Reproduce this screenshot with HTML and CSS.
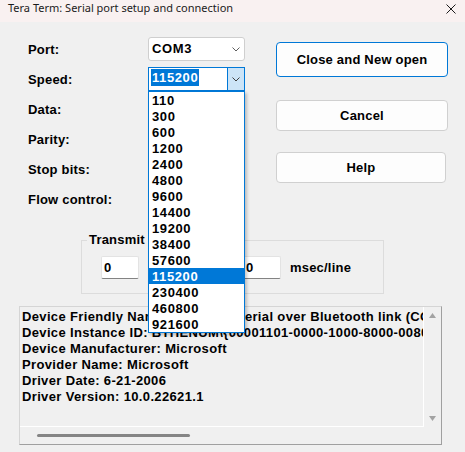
FILE: index.html
```html
<!DOCTYPE html>
<html>
<head>
<meta charset="utf-8">
<title>Tera Term: Serial port setup and connection</title>
<link rel="stylesheet" href="styles.css">
</head>
<body>
<div class="titlebar">
  <span class="title">Tera Term: Serial port setup and connection</span>
  <svg class="close" width="10" height="10" viewBox="0 0 10 10"><path d="M0.5 0.5 L9.5 9.5 M9.5 0.5 L0.5 9.5" stroke="#1b1b1b" stroke-width="1" fill="none"/></svg>
</div>
<div class="dialog">
  <div class="top">
    <div class="form">
      <div class="label">Port:</div>
      <div class="combo">
        <span class="value">COM3</span>
        <span class="chev"><svg width="8" height="5" viewBox="0 0 8 5"><path d="M0.5 0.5 L4 4 L7.5 0.5" stroke="#5f5f5f" stroke-width="1" fill="none"/></svg></span>
      </div>
      <div class="label">Speed:</div>
      <div class="combo combo-open">
        <span class="value"><span class="sel">115200</span></span>
        <span class="drop-btn"><svg width="8" height="5" viewBox="0 0 8 5"><path d="M0.5 0.5 L4 4 L7.5 0.5" stroke="#3f3f3f" stroke-width="1" fill="none"/></svg></span>
        <ul class="list">
          <li>110</li>
          <li>300</li>
          <li>600</li>
          <li>1200</li>
          <li>2400</li>
          <li>4800</li>
          <li>9600</li>
          <li>14400</li>
          <li>19200</li>
          <li>38400</li>
          <li>57600</li>
          <li class="active">115200</li>
          <li>230400</li>
          <li>460800</li>
          <li>921600</li>
        </ul>
      </div>
      <div class="label">Data:</div>
      <div class="combo"><span class="value">8 bit</span></div>
      <div class="label">Parity:</div>
      <div class="combo"><span class="value">none</span></div>
      <div class="label">Stop bits:</div>
      <div class="combo"><span class="value">1 bit</span></div>
      <div class="label">Flow control:</div>
      <div class="combo"><span class="value">none</span></div>
    </div>
    <div class="buttons">
      <button class="btn btn-default">Close and New open</button>
      <button class="btn btn-cancel">Cancel</button>
      <button class="btn btn-help">Help</button>
    </div>
  </div>
  <fieldset class="group">
    <legend>Transmit delay</legend>
    <div class="delay-row">
      <div class="edit">0</div>
      <span class="unit unit-char">msec/char</span>
      <div class="edit">0</div>
      <span class="unit">msec/line</span>
    </div>
  </fieldset>
  <div class="memo">
    <div class="memo-text">Device Friendly Name: Standard Serial over Bluetooth link (COM3)
Device Instance ID: BTHENUM\{00001101-0000-1000-8000-00805F9B34FB}_LOCALMFG&amp;0000\7&amp;2A6B4C5D&amp;0&amp;000000000000_00000005
Device Manufacturer: Microsoft
Provider Name: Microsoft
Driver Date: 6-21-2006
Driver Version: 10.0.22621.1</div>
    <div class="vscroll">
      <svg width="7" height="5" viewBox="0 0 7 5"><path d="M3.5 0 L7 5 L0 5 Z" fill="#a3a3a3"/></svg>
      <svg width="7" height="5" viewBox="0 0 7 5"><path d="M0 0 L7 0 L3.5 5 Z" fill="#a3a3a3"/></svg>
    </div>
    <div class="hscroll"><div class="thumb"></div></div>
    <div class="corner"></div>
  </div>
</div>
</body>
</html>
```

FILE: styles.css
```css
* {
  box-sizing: border-box;
}

html,
body {
  margin: 0;
  padding: 0;
}

body {
  width: 465px;
  height: 452px;
  overflow: hidden;
  background: #f0f0f0;
  font-family: "Liberation Sans", Arial, sans-serif;
  font-size: 13px;
  font-weight: bold;
  letter-spacing: 0.2px;
  color: #000;
}

.titlebar {
  height: 22px;
  background: #f9f1f1;
  display: flex;
  justify-content: space-between;
  align-items: flex-start;
  padding: 0 9px 0 8px;
}

.title {
  font-family: "Noto Sans", sans-serif;
  font-weight: normal;
  font-size: 11px;
  line-height: 16px;
  letter-spacing: 0;
  color: #1b1b1b;
}

.close {
  margin-top: 4px;
}

.dialog {
  padding-top: 15px;
}

.top {
  display: flex;
  align-items: flex-start;
}

.form {
  display: grid;
  grid-template-columns: 120px 97px;
  grid-auto-rows: 24px;
  row-gap: 6px;
  margin-left: 28px;
}

.label {
  line-height: 26px;
  white-space: nowrap;
}

.combo {
  position: relative;
  display: flex;
  background: #fff;
  border: 1px solid #cfcfcf;
  border-radius: 3px;
}

.value {
  flex: 1;
  padding-left: 3px;
  line-height: 22px;
  letter-spacing: 0.6px;
}

.chev {
  width: 17px;
  display: flex;
  align-items: center;
  justify-content: center;
}

.combo-open {
  border-color: #0078d7;
  border-radius: 0;
}

.combo-open .value {
  padding-top: 1px;
  display: flex;
  align-items: flex-start;
}

.sel {
  display: inline-block;
  margin-left: -1px;
  padding: 0 1px;
  line-height: 17px;
  background: #0078d7;
  color: #fff;
}

.drop-btn {
  width: 17px;
  background: #cce4f7;
  border-left: 1px solid #0078d7;
  display: flex;
  align-items: center;
  justify-content: center;
  padding-top: 1px;
}

.list {
  position: absolute;
  left: -1px;
  top: 23px;
  width: 97px;
  margin: 0;
  padding: 0;
  list-style: none;
  background: #fff;
  border: 1px solid #0078d7;
  box-shadow: 2px 2px 3px rgba(0, 0, 0, 0.22);
  z-index: 10;
}

.list li {
  height: 16px;
  padding: 1px 0 0 3px;
  line-height: 15px;
  letter-spacing: 0.6px;
}

.list .active {
  background: #0078d7;
  color: #fff;
}

.buttons {
  display: flex;
  flex-direction: column;
  margin-left: 31px;
  padding-top: 5px;
}

.btn {
  width: 172px;
  height: 31px;
  border: 1px solid #d0d0d0;
  border-radius: 4px;
  background: #fdfdfd;
  font: inherit;
  letter-spacing: inherit;
  color: #000;
  padding: 0;
}

.btn-default {
  height: 35px;
  border-color: #0078d7;
}

.btn-cancel {
  margin-top: 23px;
}

.btn-help {
  margin-top: 21px;
  width: 170px;
}

.group {
  margin: 21px 0 0 81px;
  width: 303px;
  min-width: 0;
  border: 1px solid #dcdcdc;
  padding: 8px 0 14px 0;
}

.group legend {
  margin-left: 5px;
  padding: 0 2px;
  line-height: 16px;
}

.delay-row {
  display: flex;
  align-items: center;
  padding-left: 19px;
}

.edit {
  width: 38px;
  height: 23px;
  background: #fff;
  border: 1px solid #e3e3e3;
  border-bottom-color: #838383;
  border-radius: 2px;
  padding-left: 2px;
  line-height: 21px;
  letter-spacing: 0.6px;
}

.unit {
  margin-left: 9px;
}

.unit-char {
  width: 95px;
}

.memo {
  margin: 12px 0 0 19px;
  width: 423px;
  height: 139px;
  border: 1px solid;
  border-color: #d5d5d5 #a0a0a0 #a0a0a0 #d5d5d5;
  display: grid;
  grid-template-columns: 1fr 17px;
  grid-template-rows: 1fr 17px;
}

.memo-text {
  padding: 2px 0 0 2px;
  overflow: hidden;
  white-space: pre;
  line-height: 16px;
  letter-spacing: 0.35px;
  border-right: 1px solid #fff;
  border-bottom: 1px solid #fff;
}

.vscroll {
  display: flex;
  flex-direction: column;
  justify-content: space-between;
  align-items: center;
  padding: 6px 0 6px 0;
}

.hscroll {
  padding: 7px 0 0 17px;
}

.thumb {
  width: 153px;
  height: 3px;
  border-radius: 2px;
  background: #858585;
}
```
